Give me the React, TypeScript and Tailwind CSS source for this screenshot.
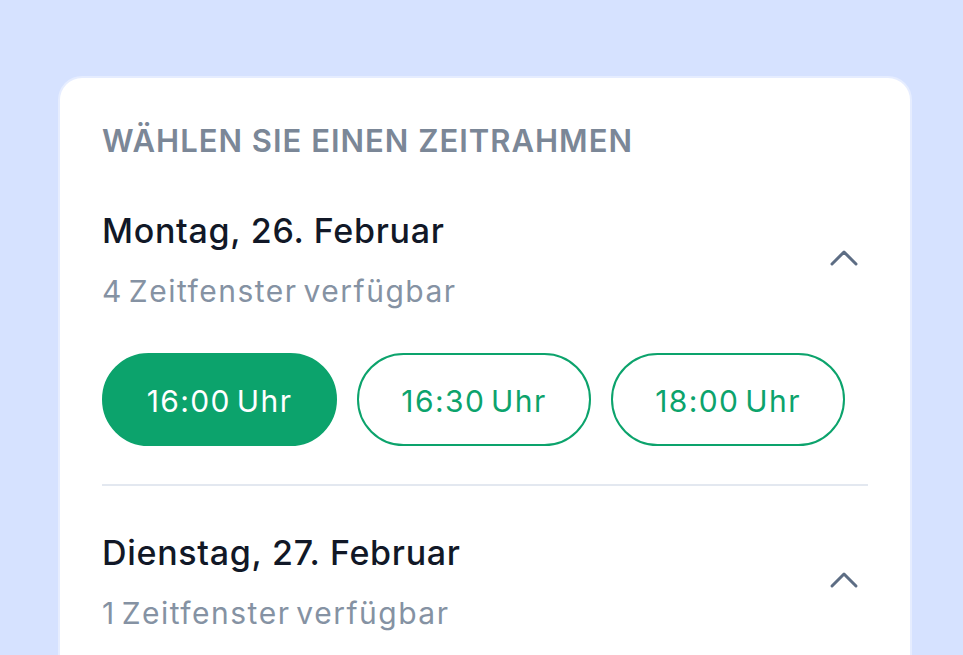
const DAYS = [
  {
    id: "mo",
    label: "Montag, 26. Februar",
    available: "4 Zeitfenster verfügbar",
    slots: ["16:00 Uhr", "16:30 Uhr", "18:00 Uhr"],
    selected: "16:00 Uhr"
  },
  {
    id: "di",
    label: "Dienstag, 27. Februar",
    available: "1 Zeitfenster verfügbar",
    slots: [],
    selected: null
  }
]

type Day = (typeof DAYS)[number]

function Chevron() {
  return (
    <svg width="30" height="18" viewBox="0 0 30 18" fill="none" className="mr-[9px] -mt-[5px] shrink-0">
      <polyline
        points="3,15 15,3 27,15"
        stroke="#5d6d84"
        strokeWidth="3"
        strokeLinecap="round"
        strokeLinejoin="round"
      />
    </svg>
  )
}

function DayHeader({ day }: { day: Day }) {
  return (
    <div className="flex items-center justify-between">
      <div className="flex flex-col gap-[22px]">
        <h3 className="text-[34px] leading-[40px] font-medium tracking-[0.7px] text-[#111827]">
          {day.label}
        </h3>
        <p className="text-[30px] leading-[36px] tracking-[1.5px] text-[#8592a3] [word-spacing:-4px]">
          {day.available}
        </p>
      </div>
      <Chevron />
    </div>
  )
}

export default function App() {
  return (
    <div
      className="h-[655px] w-[963px] overflow-hidden bg-[#d6e2ff] pt-[78px] pr-[53px] pl-[60px]"
      style={{ fontFamily: "Inter, 'Noto Sans', sans-serif" }}
    >
      <div className="rounded-t-[22px] bg-white px-[42px] pt-[43px] pb-10 shadow-[0_0_0_2px_#e6edff]">
        <h2 className="text-[31px] leading-[40px] font-semibold tracking-[1px] text-[#7b8797] uppercase">
          Wählen Sie einen Zeitrahmen
        </h2>

        <div className="mt-[50px] border-b-2 border-[#e3e8f0] pb-[38px]">
          <DayHeader day={DAYS[0]} />
          <div className="mt-[44px] flex gap-[20px]">
            {DAYS[0].slots.map((slot) =>
              slot === DAYS[0].selected ? (
                <button
                  key={slot}
                  className="h-[93px] w-[235px] rounded-full border-2 border-[#0ca36c] bg-[#0ca36c] pt-1 text-[30px] tracking-[1.4px] text-white [word-spacing:-4px]"
                >
                  {slot}
                </button>
              ) : (
                <button
                  key={slot}
                  className="h-[93px] w-[234px] rounded-full border-2 border-[#0ca36c] bg-white pt-1 text-[30px] tracking-[1.4px] text-[#0ca36c] [word-spacing:-4px]"
                >
                  {slot}
                </button>
              )
            )}
          </div>
        </div>

        <div className="pt-[47px]">
          <DayHeader day={DAYS[1]} />
        </div>
      </div>
    </div>
  )
}
